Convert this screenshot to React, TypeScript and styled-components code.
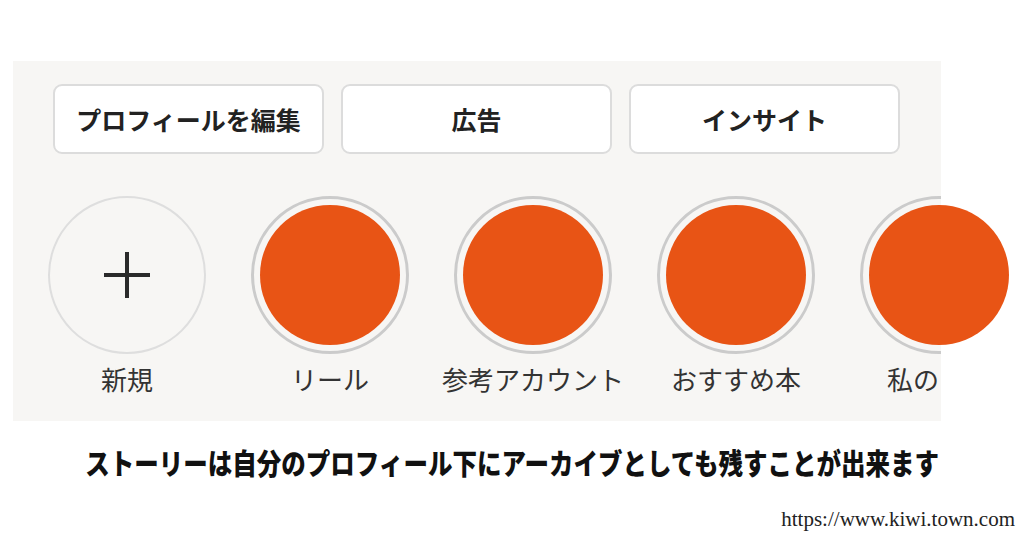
import styled, { createGlobalStyle } from "styled-components";

const GlobalStyle = createGlobalStyle`
    html, body {
        margin: 0;
        padding: 0;
        background: #ffffff;
    }
    body {
        font-family: "Noto Sans CJK JP", "Noto Sans", sans-serif;
    }
`;

interface Story {
    label: string;
    isNew?: boolean;
    cut?: number; // px kept from the left edge when the item runs past the panel
}

const stories: Story[] = [
    { label: "新規", isNew: true },
    { label: "リール" },
    { label: "参考アカウント" },
    { label: "おすすめ本" },
    { label: "私の記録", cut: 82 },
];

const PlusIcon = () => (
    <svg width="48" height="48" viewBox="0 0 48 48">
        <line x1="24" y1="1" x2="24" y2="47" stroke="#2a2a2a" strokeWidth="4" />
        <line x1="1" y1="24" x2="47" y2="24" stroke="#2a2a2a" strokeWidth="4" />
    </svg>
);

const App = () => {
    return (
        <>
            <GlobalStyle />
            <StyledPage>
                <StyledPanel>
                    <StyledButtonRow>
                        <StyledButton>プロフィールを編集</StyledButton>
                        <StyledButton>広告</StyledButton>
                        <StyledButton>インサイト</StyledButton>
                    </StyledButtonRow>
                    <StyledStoryRow>
                        {stories.map((s) => (
                            <StyledStory key={s.label}>
                                <StyledAvatar>
                                    <StyledRing $isNew={s.isNew} $cut={s.cut} />
                                    {s.isNew ? (
                                        <StyledCenter>
                                            <PlusIcon />
                                        </StyledCenter>
                                    ) : (
                                        <StyledFill />
                                    )}
                                </StyledAvatar>
                                <StyledLabel $cut={s.cut}>{s.label}</StyledLabel>
                            </StyledStory>
                        ))}
                    </StyledStoryRow>
                </StyledPanel>
                <StyledCaption>
                    <span>ストーリーは自分のプロフィール下にアーカイブとしても残すことが出来ます</span>
                </StyledCaption>
                <StyledUrl>https://www.kiwi.town.com</StyledUrl>
            </StyledPage>
        </>
    );
};

const StyledPage = styled.div`
    width: 1024px;
    height: 542px;
    padding-top: 61px;
    box-sizing: border-box;
    overflow: hidden;
`;

const StyledPanel = styled.div`
    width: 928px;
    height: 360px;
    margin-left: 13px;
    padding-top: 23px;
    box-sizing: border-box;
    background: #f7f6f4;
`;

const StyledButtonRow = styled.div`
    display: flex;
    gap: 17px;
    padding-left: 40px;
`;

const StyledButton = styled.div`
    width: 271px;
    height: 70px;
    box-sizing: border-box;
    display: flex;
    align-items: center;
    justify-content: center;
    background: #ffffff;
    border: 2px solid #dcdcdc;
    border-radius: 9px;
    font-size: 25px;
    font-weight: 700;
    color: #222222;
`;

const StyledStoryRow = styled.div`
    display: flex;
    gap: 43px;
    padding-left: 34px;
    margin-top: 42px;
`;

const StyledStory = styled.div`
    width: 160px;
    flex: none;
    display: flex;
    flex-direction: column;
    align-items: center;
`;

const StyledAvatar = styled.div`
    width: 158px;
    height: 158px;
    display: grid;
    place-items: center;

    > * {
        grid-area: 1 / 1;
    }
`;

const StyledRing = styled.div<{ $isNew?: boolean; $cut?: number }>`
    width: 158px;
    height: 158px;
    box-sizing: border-box;
    border-radius: 50%;
    border: ${(p) => (p.$isNew ? "2px solid #dedede" : "3px solid #cbcbcb")};
    clip-path: ${(p) => (p.$cut ? `inset(0 ${159 - p.$cut}px 0 0)` : "none")};
`;

const StyledFill = styled.div`
    width: 140px;
    height: 140px;
    border-radius: 50%;
    background: #e85415;
`;

const StyledCenter = styled.div`
    display: flex;
    align-items: center;
    justify-content: center;
`;

const StyledLabel = styled.div<{ $cut?: number }>`
    margin-top: 8px;
    width: 200px;
    text-align: center;
    font-size: 26px;
    line-height: 34px;
    color: #333333;
    white-space: nowrap;
    clip-path: ${(p) => (p.$cut ? `inset(0 ${200 - 20 - p.$cut + 3}px 0 0)` : "none")};
`;

const StyledCaption = styled.div`
    margin-top: 23px;
    text-align: center;
    line-height: 36px;

    span {
        display: inline-block;
        font-size: 29px;
        font-weight: 900;
        color: #111111;
        transform: scaleX(0.845);
        white-space: nowrap;
    }
`;

const StyledUrl = styled.div`
    margin-top: 21px;
    padding-right: 9px;
    text-align: right;
    font-family: "Liberation Serif", serif;
    font-size: 21px;
    line-height: 24px;
    color: #222222;
`;

export default App;
